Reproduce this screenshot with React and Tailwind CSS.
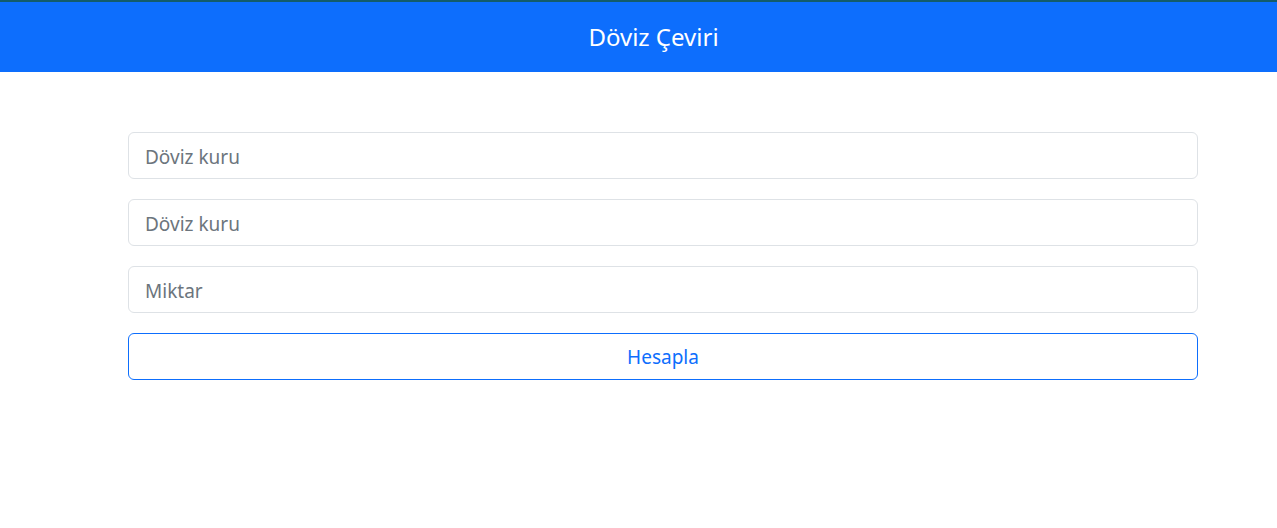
import React, { useState } from "react";

export default function App() {
  const [from, setFrom] = useState("");
  const [to, setTo] = useState("");
  const [amount, setAmount] = useState("");

  const inputClass =
    "w-full h-[47px] rounded-[6px] border border-[#dee2e6] bg-white px-4 pt-[2px] text-[19px] text-[#212529] placeholder:text-[#6c757d] outline-none";

  return (
    <div className="min-h-[528px] bg-white font-['Noto_Sans',sans-serif]">
      <header className="border-t-2 border-[#135c6b] bg-[#0d6efd] h-[72px] flex items-center justify-center pl-[30px]">
        <h1 className="text-[24px] text-white leading-none">Döviz Çeviri</h1>
      </header>

      <main className="ml-[128px] w-[1070px] pt-[60px] flex flex-col gap-5">
        <input
          className={inputClass}
          placeholder="Döviz kuru"
          value={from}
          onChange={(e) => setFrom(e.target.value)}
        />
        <input
          className={inputClass}
          placeholder="Döviz kuru"
          value={to}
          onChange={(e) => setTo(e.target.value)}
        />
        <input
          className={inputClass}
          placeholder="Miktar"
          value={amount}
          onChange={(e) => setAmount(e.target.value)}
        />
        <button className="w-full h-[47px] rounded-[6px] border border-[#0d6efd] pt-[2px] text-[19px] text-[#0d6efd] bg-white">
          Hesapla
        </button>
      </main>
    </div>
  );
}
